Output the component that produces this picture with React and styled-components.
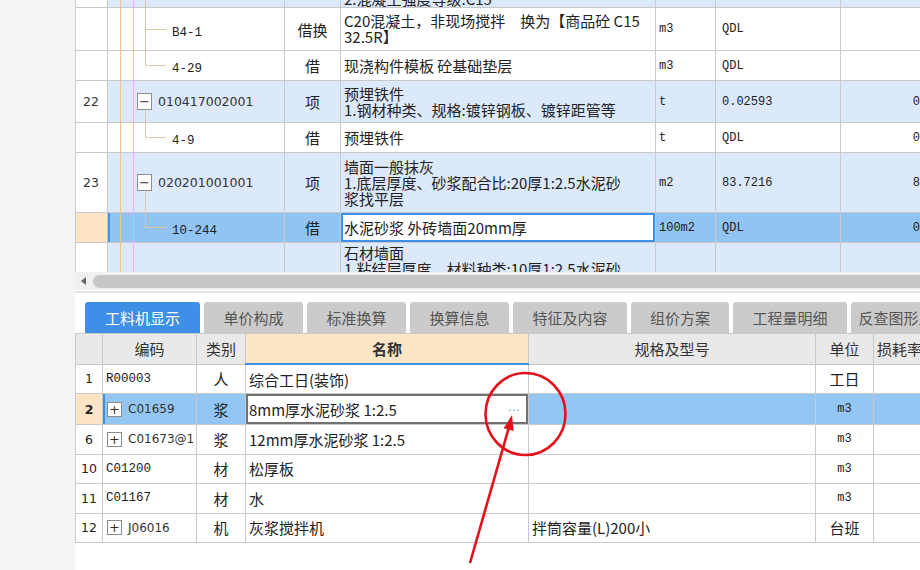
import React from 'react';
import styled, { createGlobalStyle, css } from 'styled-components';

const CJK = '"Noto Sans CJK SC", "Noto Sans", sans-serif';
const MONO = '"Liberation Mono", "Noto Sans CJK SC", monospace';
const SANS = '"DejaVu Sans", "Noto Sans CJK SC", sans-serif';

const ORANGE = '#f6c47c';
const LINK = '#d8c8a8';
const BLUE = '#3d8fe8';
const line = (c) => `linear-gradient(${c}, ${c})`;

const GlobalStyle = createGlobalStyle`
    html, body { margin: 0; padding: 0; }
    body {
        width: 920px;
        height: 570px;
        overflow: hidden;
        background: #f4f4f4;
        font-family: ${CJK};
        color: #222;
    }
`;

const topCols = [32, 177, 56, 315, 60, 125, 120];
const bottomCols = [27, 94, 49, 283, 287, 58, 90];

// first and last rows are only partly scrolled into view
const topRows = [
    { tone: 'blue', node: 'stem', align: 'bottom', name: ['2.混凝土强度等级:C15'], h: 20 },
    { tone: 'white', node: 'mid', code: 'B4-1', type: '借换', name: ['C20混凝土，非现场搅拌　换为【商品砼 C15', '32.5R】'], unit: 'm3', qty: 'QDL', h: 43 },
    { tone: 'white', node: 'last', code: '4-29', type: '借', name: ['现浇构件模板 砼基础垫层'], unit: 'm3', qty: 'QDL', h: 30 },
    { tone: 'blue', node: 'parent', num: '22', code: '010417002001', type: '项', name: ['预埋铁件', '1.钢材种类、规格:镀锌钢板、镀锌距管等'], unit: 't', qty: '0.02593', rest: '0.0259', h: 42 },
    { tone: 'white', node: 'last', code: '4-9', type: '借', name: ['预埋铁件'], unit: 't', qty: 'QDL', rest: '0.0259', h: 30 },
    { tone: 'blue', node: 'parent', num: '23', code: '020201001001', type: '项', name: ['墙面一般抹灰', '1.底层厚度、砂浆配合比:20厚1:2.5水泥砂', '浆找平层'], unit: 'm2', qty: '83.7216', rest: '83.722', h: 60 },
    { tone: 'sel', node: 'last', code: '10-244', type: '借', edit: '水泥砂浆 外砖墙面20mm厚', unit: '100m2', qty: 'QDL', rest: '0.8372', h: 29 },
    { tone: 'blue', node: 'trunk', align: 'top', name: ['石材墙面', '1.粘结层厚度、材料种类:10厚1:2.5水泥砂'], h: 40 },
];

const tabs = [
    { label: '工料机显示', w: 115, active: true },
    { label: '单价构成', w: 99 },
    { label: '标准换算', w: 99 },
    { label: '换算信息', w: 99 },
    { label: '特征及内容', w: 114 },
    { label: '组价方案', w: 98 },
    { label: '工程量明细', w: 114 },
    { label: '反查图形工程量', w: 120 },
];

const bottomRows = [
    { num: '1', code: 'R00003', mono: true, type: '人', name: '综合工日(装饰)', unit: '工日' },
    { num: '2', code: 'C01659', plus: true, type: '浆', name: '8mm厚水泥砂浆 1:2.5', unit: 'm3', sel: true },
    { num: '6', code: 'C01673@1', plus: true, type: '浆', name: '12mm厚水泥砂浆 1:2.5', unit: 'm3' },
    { num: '10', code: 'C01200', mono: true, type: '材', name: '松厚板', unit: 'm3' },
    { num: '11', code: 'C01167', mono: true, type: '材', name: '水', unit: 'm3' },
    { num: '12', code: 'J06016', plus: true, type: '机', name: '灰浆搅拌机', spec: '拌筒容量(L)200小', unit: '台班' },
];

const isAscii = (s) => /^[\x00-\x7f]+$/.test(s);
const sum = (list) => list.reduce((a, b) => a + b, 0);

const Columns = ({ widths }) => (
    <colgroup>
        {widths.map((w, i) => (
            <S.Col key={i} $w={w} />
        ))}
    </colgroup>
);

const TreeContent = ({ row }) => {
    if (!row.code) return null;
    if (row.node === 'parent')
        return (
            <S.NodeRow>
                <S.Toggle>−</S.Toggle>
                <S.SansCode>{row.code}</S.SansCode>
            </S.NodeRow>
        );
    return <S.MonoCode>{row.code}</S.MonoCode>;
};

const App = () => (
    <S.Page>
        <GlobalStyle />
        <S.Sidebar />
        <S.Main>
            <S.TopView>
                <S.Grid $width={sum(topCols)} $shift={13}>
                    <Columns widths={topCols} />
                    <tbody>
                        {topRows.map((r, i) => (
                            <S.TopRow key={i} $tone={r.tone} $h={r.h} $align={r.align}>
                                <S.NumCell $sel={r.tone === 'sel'}>{r.num}</S.NumCell>
                                <S.TreeCell $node={r.node} $sel={r.tone === 'sel'}>
                                    <TreeContent row={r} />
                                </S.TreeCell>
                                <S.TypeCell>{r.type}</S.TypeCell>
                                {r.edit ? (
                                    <S.EditCell>
                                        <S.TopEdit>{r.edit}</S.TopEdit>
                                    </S.EditCell>
                                ) : (
                                    <S.NameCell>
                                        {r.name.map((t, k) => (
                                            <div key={k}>{t}</div>
                                        ))}
                                    </S.NameCell>
                                )}
                                <S.UnitCell>{r.unit}</S.UnitCell>
                                <S.QtyCell>{r.qty}</S.QtyCell>
                                <S.RestCell>{r.rest}</S.RestCell>
                            </S.TopRow>
                        ))}
                    </tbody>
                </S.Grid>
            </S.TopView>

            <S.HScroll>
                <S.ArrowLeft />
                <S.Thumb />
            </S.HScroll>

            <S.TabStrip>
                {tabs.map((t) => (
                    <S.Tab key={t.label} $w={t.w} $active={t.active}>
                        {t.label}
                    </S.Tab>
                ))}
            </S.TabStrip>

            <S.Grid $width={sum(bottomCols)}>
                <Columns widths={bottomCols} />
                <thead>
                    <tr>
                        <S.Head />
                        <S.Head>编码</S.Head>
                        <S.Head>类别</S.Head>
                        <S.Head $focus>名称</S.Head>
                        <S.Head>规格及型号</S.Head>
                        <S.Head>单位</S.Head>
                        <S.Head $left>损耗率</S.Head>
                    </tr>
                </thead>
                <tbody>
                    {bottomRows.map((r) => (
                        <S.BottomRow key={r.num} $sel={r.sel}>
                            <S.BNum $sel={r.sel}>{r.num}</S.BNum>
                            <S.BCode $sel={r.sel}>
                                <S.NodeRow>
                                    {r.plus && <S.Plus>+</S.Plus>}
                                    {r.mono ? <S.MonoCode>{r.code}</S.MonoCode> : <S.SansCode $small>{r.code}</S.SansCode>}
                                </S.NodeRow>
                            </S.BCode>
                            <S.BType>{r.type}</S.BType>
                            {r.sel ? (
                                <S.EditCell>
                                    <S.BottomEdit>
                                        <span>{r.name}</span>
                                        <S.Dots>...</S.Dots>
                                    </S.BottomEdit>
                                </S.EditCell>
                            ) : (
                                <S.BText>{r.name}</S.BText>
                            )}
                            <S.BText>{r.spec}</S.BText>
                            <S.BUnit $mono={isAscii(r.unit)}>{r.unit}</S.BUnit>
                            <S.BText />
                        </S.BottomRow>
                    ))}
                </tbody>
            </S.Grid>
        </S.Main>

        <S.Overlay viewBox='0 0 920 570' xmlns='http://www.w3.org/2000/svg'>
            <ellipse cx='525.5' cy='414' rx='40' ry='41' fill='none' stroke='#e4121c' strokeWidth='2.6' />
            <line x1='470' y1='563' x2='509' y2='427' stroke='#e4121c' strokeWidth='2.6' />
            <polygon points='512,415 513.6,431 503.6,428.2' fill='#e4121c' />
        </S.Overlay>
    </S.Page>
);

const S = {};
S.Page = styled.div`
    position: relative;
    display: flex;
    width: 920px;
    height: 570px;
`;

S.Sidebar = styled.div`
    width: 75px;
    flex: none;
    background: #f4f4f4;
`;

S.Main = styled.div`
    flex: 1;
    min-width: 0;
    overflow: hidden;
    background: #fff;
    display: flex;
    flex-direction: column;
`;

S.TopView = styled.div`
    height: 272px;
    flex: none;
    overflow: hidden;
`;

S.Col = styled.col`
    width: ${(p) => p.$w}px;
`;

S.Grid = styled.table`
    border-collapse: collapse;
    table-layout: fixed;
    width: ${(p) => p.$width}px;
    margin-top: ${(p) => (p.$shift ? -p.$shift : 0)}px;
    font-size: 15px;

    td,
    th {
        border: 1px solid #c9c9c9;
        padding: 0 3px;
        white-space: nowrap;
        overflow: hidden;
    }
`;

const rowTones = {
    white: '#fff',
    blue: '#dce9fb',
    sel: '#91c4f2',
};

S.TopRow = styled.tr`
    height: ${(p) => p.$h}px;
    background: ${(p) => rowTones[p.$tone]};

    td {
        vertical-align: ${(p) => p.$align || 'middle'};
        padding-top: ${(p) => (p.$align === 'top' ? 2 : 0)}px;
    }
`;

S.NumCell = styled.td`
    background: ${(p) => (p.$sel ? '#fde4c4' : '#fff')};
    font-family: ${SANS};
    font-size: 12.5px;
    color: #333;
    padding-left: 7px !important;
`;

const treeBg = {
    mid: css`
        background-image: ${line(ORANGE)}, ${line(ORANGE)}, ${line(LINK)}, ${line(LINK)};
        background-size: 1px 100%, 1px 100%, 1px 100%, 21px 1px;
        background-position: 12px 0, 25px 0, 37px 0, 37px 50%;
        padding-left: 64px !important;
    `,
    last: css`
        background-image: ${line(ORANGE)}, ${line(ORANGE)}, ${line(LINK)}, ${line(LINK)};
        background-size: 1px 100%, 1px 100%, 1px 50%, 21px 1px;
        background-position: 12px 0, 25px 0, 37px 0, 37px 50%;
        padding-left: 64px !important;
    `,
    parent: css`
        background-image: ${line(ORANGE)}, ${line(ORANGE)}, ${line(LINK)};
        background-size: 1px 100%, 1px 100%, 1px 50%;
        background-position: 12px 0, 25px 0, 37px 100%;
        padding-left: 29px !important;
    `,
    stem: css`
        background-image: ${line(ORANGE)}, ${line(ORANGE)}, ${line(LINK)};
        background-size: 1px 100%, 1px 100%, 1px 100%;
        background-position: 12px 0, 25px 0, 37px 0;
    `,
    trunk: css`
        background-image: ${line(ORANGE)}, ${line(ORANGE)};
        background-size: 1px 100%, 1px 100%;
        background-position: 12px 0, 25px 0;
    `,
};

S.TreeCell = styled.td`
    background-repeat: no-repeat;
    ${(p) => treeBg[p.$node]};
    ${(p) => p.$sel && `box-shadow: inset 2px 0 0 ${BLUE};`}
`;

S.NodeRow = styled.div`
    display: flex;
    align-items: center;
    gap: 6px;
`;

S.Toggle = styled.span`
    flex: none;
    width: 13px;
    height: 15px;
    border: 1px solid #8d8d8d;
    background: #fff;
    display: flex;
    align-items: center;
    justify-content: center;
    font-family: ${SANS};
    font-size: 13px;
    line-height: 1;
    color: #333;
`;

S.Plus = styled(S.Toggle)`
    height: 13px;
    margin-left: 1px;
`;

S.SansCode = styled.span`
    font-family: ${SANS};
    font-size: ${(p) => (p.$small ? 12 : 12.5)}px;
    color: #333;
`;

S.MonoCode = styled.span`
    font-family: ${MONO};
    font-size: 12.5px;
    color: #222;
`;

S.TypeCell = styled.td`
    text-align: center;
`;

S.NameCell = styled.td`
    line-height: 16px;
`;

S.EditCell = styled.td`
    padding: 0 !important;
`;

S.TopEdit = styled.div`
    box-sizing: border-box;
    height: 29px;
    border: 2px solid ${BLUE};
    background: #fff;
    padding: 0 1px;
    line-height: 25px;
`;

S.UnitCell = styled.td`
    font-family: ${MONO};
    font-size: 12px;
`;

S.QtyCell = styled.td`
    font-family: ${MONO};
    font-size: 12px;
    padding-left: 6px !important;
`;

S.RestCell = styled.td`
    font-family: ${MONO};
    font-size: 12px;
    text-align: right;
    padding-right: 4px !important;
`;

S.HScroll = styled.div`
    height: 18px;
    flex: none;
    background: #f0f0f0;
    display: flex;
    align-items: center;
`;

S.ArrowLeft = styled.span`
    width: 0;
    height: 0;
    margin-left: 6px;
    border-right: 5px solid #666;
    border-top: 4px solid transparent;
    border-bottom: 4px solid transparent;
`;

S.Thumb = styled.span`
    flex: 1;
    height: 13px;
    margin-left: 7px;
    border-radius: 7px 0 0 7px;
    background: #c7c7c7;
`;

S.TabStrip = styled.div`
    flex: none;
    display: flex;
    gap: 4px;
    padding: 9px 0 0 10px;
    border-top: 2px solid #e3e3e3;
    margin-top: 1px;
`;

S.Tab = styled.div`
    flex: none;
    width: ${(p) => p.$w}px;
    height: 31px;
    line-height: 31px;
    text-align: center;
    border-radius: 3px 3px 0 0;
    font-size: 15px;
    white-space: nowrap;
    overflow: hidden;
    background: ${(p) => (p.$active ? BLUE : '#cbcbcb')};
    color: ${(p) => (p.$active ? '#fff' : '#555')};
`;

S.Head = styled.th`
    height: 29px;
    background: ${(p) => (p.$focus ? '#fde6c6' : '#e9e9e9')};
    font-weight: ${(p) => (p.$focus ? 700 : 400)};
    text-align: ${(p) => (p.$left ? 'left' : 'center')};
    color: #333;
    font-size: 15px;
    ${(p) => p.$focus && `border-bottom: 2px solid ${BLUE} !important;`}
`;

S.BottomRow = styled.tr`
    height: 29.5px;
    background: ${(p) => (p.$sel ? '#93c6f2' : '#fff')};
`;

S.BNum = styled.td`
    text-align: center;
    font-family: ${SANS};
    font-size: 12.5px;
    font-weight: ${(p) => (p.$sel ? 700 : 400)};
    background: ${(p) => (p.$sel ? '#fde4c4' : 'transparent')};
    padding: 0 !important;
`;

S.BCode = styled.td`
    ${(p) => p.$sel && `box-shadow: inset 2px 0 0 ${BLUE};`}
`;

S.BType = styled.td`
    text-align: center;
`;

S.BText = styled.td``;

S.BUnit = styled.td`
    text-align: center;
    font-family: ${(p) => (p.$mono ? MONO : CJK)};
    font-size: ${(p) => (p.$mono ? 12 : 15)}px;
`;

S.BottomEdit = styled.div`
    box-sizing: border-box;
    height: 30px;
    border: 2px solid #717171;
    background: #fff;
    padding: 0 6px 0 1px;
    display: flex;
    align-items: center;
    justify-content: space-between;
`;

S.Dots = styled.span`
    color: #5b9ad6;
    font-family: ${SANS};
    font-size: 11px;
    letter-spacing: 0.5px;
    margin-bottom: 4px;
`;

S.Overlay = styled.svg`
    position: absolute;
    left: 0;
    top: 0;
    width: 920px;
    height: 570px;
    pointer-events: none;
`;

export default App;
